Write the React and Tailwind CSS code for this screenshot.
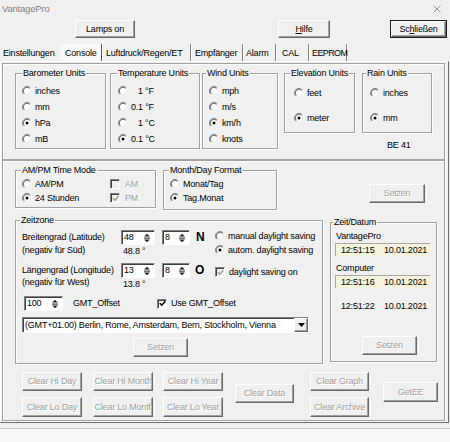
import React from 'react'

const raised = 'border border-t-white border-l-white border-r-[#696969] border-b-[#696969] shadow-[inset_-1px_-1px_0_#a0a0a0]'
const sunken = 'border border-t-[#808080] border-l-[#808080] border-r-white border-b-white shadow-[inset_1px_1px_0_#404040]'
const dis = 'text-[#a0a0a0] [text-shadow:1px_1px_0_#fff]'

function Btn({ children, className = '', disabled, def }) {
  const frame = def
    ? 'border border-t-white border-l-white border-r-[#696969] border-b-[#696969] shadow-[0_0_0_1px_#1a1a1a,inset_-1px_-1px_0_#a0a0a0]'
    : raised
  return (
    <div className={`flex items-center justify-center whitespace-nowrap overflow-hidden bg-[#f0f0f0] ${frame} ${disabled ? dis : ''} ${className}`}>
      {children}
    </div>
  )
}

function RadioDot({ checked }) {
  return (
    <svg width="10" height="10" viewBox="0 0 12 12" className="shrink-0">
      <circle cx="6" cy="6" r="5" fill="#fff" />
      <path d="M2.1 9.9A5.5 5.5 0 0 1 9.9 2.1" fill="none" stroke="#808080" />
      <path d="M9.9 2.1A5.5 5.5 0 0 1 2.1 9.9" fill="none" stroke="#fff" />
      <path d="M2.8 9.2A4.5 4.5 0 0 1 9.2 2.8" fill="none" stroke="#404040" />
      <path d="M9.2 2.8A4.5 4.5 0 0 1 2.8 9.2" fill="none" stroke="#dcdcdc" />
      {checked && <circle cx="6" cy="6" r="1.8" fill="#000" />}
    </svg>
  )
}

function Radio({ checked, children, className = '' }) {
  return (
    <div className={`flex items-center gap-[3px] ${className}`}>
      <RadioDot checked={checked} />
      <span className="whitespace-pre">{children}</span>
    </div>
  )
}

function CheckBox({ checked, disabled }) {
  return (
    <span className={`flex items-center justify-center w-[10px] h-[10px] shrink-0 ${sunken} ${disabled ? 'bg-[#f0f0f0]' : 'bg-white'}`}>
      {checked && (
        <svg width="7" height="7" viewBox="0 0 7 7">
          <path d="M0.8 3.2L2.8 5.2L6.3 1.3" fill="none" stroke={disabled ? '#a0a0a0' : '#000'} strokeWidth="1.6" />
        </svg>
      )}
    </span>
  )
}

function Check({ checked, disabled, children, className = '' }) {
  return (
    <div className={`flex items-center gap-[4px] ${className}`}>
      <CheckBox checked={checked} disabled={disabled} />
      <span className={disabled ? dis : ''}>{children}</span>
    </div>
  )
}

function Spin({ value, className = '' }) {
  return (
    <div className={`flex items-center h-[15px] bg-white ${sunken} ${className}`}>
      <span className="flex-1 pl-[2px]">{value}</span>
      <svg width="6" height="10" viewBox="0 0 7 11" className="mr-[4px]">
        <polygon points="3.5,0.5 6.8,3.8 0.2,3.8" fill="#222" />
        <rect x="0" y="5" width="7" height="1.2" fill="#222" />
        <polygon points="0.2,7.2 6.8,7.2 3.5,10.5" fill="#222" />
      </svg>
    </div>
  )
}

function Group({ title, className = '', legendClass = '', children }) {
  return (
    <fieldset className={`border border-[#a0a0a0] shadow-[inset_1px_1px_0_#fff,1px_1px_0_#fff] ${className}`}>
      <legend className={`px-[1px] leading-[11px] bg-[#f0f0f0] ${legendClass}`}>{title}</legend>
      {children}
    </fieldset>
  )
}

function Tab({ children, className = '', sep = true }) {
  return (
    <div className={`flex items-center pt-[1px] whitespace-nowrap ${sep ? 'border-r border-[#808080] shadow-[1px_0_0_#fff]' : ''} ${className}`}>
      {children}
    </div>
  )
}

function TimeBox({ time, date }) {
  return (
    <div className="flex items-center h-[13px] w-[95px] pl-[5px] bg-[#f6f3dc] border-t border-l border-[#a8a8a8]">
      <span className="w-[43px]">{time}</span>
      <span>{date}</span>
    </div>
  )
}

export default function App() {
  return (
    <div className="w-[450px] h-[442px] overflow-hidden flex flex-col bg-[#f0f0f0] text-black text-[9px] leading-[11px] tracking-[-0.2px] font-['Liberation_Sans',Arial,sans-serif]">
      {/* title bar */}
      <div className="h-[17px] flex items-center justify-between pl-[2px] pr-[9px] text-[#808080]">
        <span className="text-[9.5px]">VantagePro</span>
        <svg width="8" height="8" viewBox="0 0 8 8">
          <path d="M0.5 0.5L7.5 7.5M7.5 0.5L0.5 7.5" stroke="#8a8a8a" strokeWidth="0.9" />
        </svg>
      </div>

      {/* top buttons */}
      <div className="mt-[3px] h-[18px] flex items-start">
        <Btn className="ml-[75px] w-[60px] h-[18px]">Lamps on</Btn>
        <Btn className="ml-[143px] w-[52px] h-[18px]"><u>H</u>ilfe</Btn>
        <Btn def className="ml-[61px] mt-[1px] w-[55px] h-[16px]">Sc<u>h</u>ließen</Btn>
      </div>

      {/* tabs */}
      <div className="mt-[6px] h-[17px] flex">
        <Tab sep={false} className="w-[60px] pl-[3px]">Einstellungen</Tab>
        <Tab className="w-[42px] pl-[5px] bg-[#f8f8f8] border-r-[#5a5a5a]">Console</Tab>
        <Tab className="w-[89px] pl-[4px]">Luftdruck/Regen/ET</Tab>
        <Tab className="w-[52px] pl-[4px]">Empfänger</Tab>
        <Tab className="w-[33px] pl-[3px]">Alarm</Tab>
        <Tab className="w-[33px] pl-[6px]">CAL</Tab>
        <Tab className="w-[38px] pl-[3px] tracking-[-0.6px]">EEPROM</Tab>
      </div>

      {/* tab panel */}
      <div className="h-[362px] w-[449px] border border-t-white border-l-white border-r-[#696969] border-b-[#696969] flex flex-col">
        {/* units */}
        <div className="ml-[1px] mt-[1px] w-[443px] h-[97px] border border-[#a0a0a0] shadow-[1px_1px_0_#fff,inset_1px_1px_0_#fff] flex items-start pl-[12px] pt-[4px]">
          <Group title="Barometer Units" className="w-[91px]" legendClass="ml-[6px]">
            <div className="pl-[6px] pt-[4px] pb-[1px]">
              <Radio className="h-[16px]">inches</Radio>
              <Radio className="h-[16px]">mm</Radio>
              <Radio className="h-[16px]" checked>hPa</Radio>
              <Radio className="h-[16px]">mB</Radio>
            </div>
          </Group>
          <Group title="Temperature Units" className="ml-[4px] w-[90px]" legendClass="ml-[6px]">
            <div className="pl-[7px] pt-[4px] pb-[1px]">
              <Radio className="h-[16px]">{'   1 °F'}</Radio>
              <Radio className="h-[16px]">0.1 °F</Radio>
              <Radio className="h-[16px]">{'   1 °C'}</Radio>
              <Radio className="h-[16px]" checked>0.1 °C</Radio>
            </div>
          </Group>
          <Group title="Wind Units" className="ml-[2px] w-[76px]" legendClass="ml-[3px]">
            <div className="pl-[6px] pt-[4px] pb-[1px]">
              <Radio className="h-[16px]">mph</Radio>
              <Radio className="h-[16px]">m/s</Radio>
              <Radio className="h-[16px]" checked>km/h</Radio>
              <Radio className="h-[16px]">knots</Radio>
            </div>
          </Group>
          <Group title="Elevation Units" className="ml-[6px] w-[71px]" legendClass="ml-[5px]">
            <div className="pl-[9px] pt-[6px] pb-[6px] flex flex-col gap-[9px]">
              <Radio className="h-[16px]">feet</Radio>
              <Radio className="h-[16px]" checked>meter</Radio>
            </div>
          </Group>
          <div className="ml-[7px] flex flex-col">
            <Group title="Rain Units" className="w-[70px]" legendClass="ml-[3px]">
              <div className="pl-[7px] pt-[6px] pb-[6px] flex flex-col gap-[9px]">
                <Radio className="h-[16px]">inches</Radio>
                <Radio className="h-[16px]" checked>mm</Radio>
              </div>
            </Group>
            <div className="mt-[7px] pl-[25px]">BE 41</div>
          </div>
        </div>

        {/* rest */}
        <div className="ml-[1px] w-[443px] h-[261px] border border-[#a0a0a0] shadow-[1px_1px_0_#fff,inset_1px_1px_0_#fff] flex flex-col pl-[12px]">
          {/* row A */}
          <div className="pt-[4px] flex items-start">
            <Group title="AM/PM Time Mode" className="w-[141px]" legendClass="ml-[5px]">
              <div className="pl-[6px] pt-[1px] pb-[2px] flex">
                <div className="w-[88px]">
                  <Radio className="h-[14px]">AM/PM</Radio>
                  <Radio className="h-[14px]" checked>24 Stunden</Radio>
                </div>
                <div>
                  <Check disabled className="h-[14px] gap-[5px]">AM</Check>
                  <Check disabled checked className="h-[14px] gap-[5px]">PM</Check>
                </div>
              </div>
            </Group>
            <Group title="Month/Day Format" className="ml-[7px] w-[114px]" legendClass="ml-[5px]">
              <div className="pl-[6px] pt-[1px] pb-[4px]">
                <Radio className="h-[14px]">Monat/Tag</Radio>
                <Radio className="h-[14px]" checked>Tag.Monat</Radio>
              </div>
            </Group>
            <Btn disabled className="ml-[92px] mt-[19px] w-[56px] h-[19px]">Setzen</Btn>
          </div>

          {/* row B */}
          <div className="mt-[5px] flex items-start">
            <Group title="Zeitzone" className="w-[308px]" legendClass="ml-[4px]">
              <div className="pl-[6px] pt-[4px] pb-[6px] flex flex-col">
                <div className="flex items-start">
                  <div className="w-[99px] mt-[1px] leading-[13px]">
                    <div>Breitengrad (Latitude)</div>
                    <div>(negativ für Süd)</div>
                  </div>
                  <div className="flex flex-col">
                    <div className="flex items-center">
                      <Spin value="48" className="w-[34px]" />
                      <Spin value="8" className="ml-[7px] w-[28px]" />
                      <span className="w-[18px] pl-[6px] text-[12px] font-bold">N</span>
                    </div>
                    <div className="pl-[2px] leading-[13px]">48.8 °</div>
                  </div>
                  <div className="ml-[7px] -mt-[1px]">
                    <Radio className="h-[14px]">manual daylight saving</Radio>
                    <Radio className="h-[14px]" checked>autom. daylight saving</Radio>
                  </div>
                </div>
                <div className="mt-[5px] flex items-start">
                  <div className="w-[99px] mt-[1px] leading-[12px]">
                    <div>Längengrad (Longitude)</div>
                    <div>(negativ für West)</div>
                  </div>
                  <div className="flex flex-col">
                    <div className="flex items-center">
                      <Spin value="13" className="w-[34px]" />
                      <Spin value="8" className="ml-[7px] w-[28px]" />
                      <span className="w-[18px] pl-[5px] text-[12px] font-bold">O</span>
                    </div>
                    <div className="pl-[2px] leading-[13px]">13.8 °</div>
                  </div>
                  <Check disabled checked className="ml-[7px] mt-[2px] h-[14px]">
                    <span className="text-black [text-shadow:none]">daylight saving on</span>
                  </Check>
                </div>
                <div className="mt-[5px] flex items-center">
                  <Spin value="100" className="ml-[2px] w-[39px]" />
                  <span className="ml-[10px] w-[84px]">GMT_Offset</span>
                  <Check checked>Use GMT_Offset</Check>
                </div>
                <div className={`mt-[6px] flex items-center h-[16px] w-[287px] bg-white ${sunken}`}>
                  <span className="flex-1 pl-[2px] whitespace-nowrap overflow-hidden">(GMT+01.00) Berlin, Rome, Amsterdam, Bern, Stockholm, Vienna</span>
                  <div className={`w-[14px] h-[14px] flex items-center justify-center bg-[#f0f0f0] ${raised}`}>
                    <svg width="7" height="4" viewBox="0 0 7 4"><polygon points="0,0 7,0 3.5,4" fill="#000" /></svg>
                  </div>
                </div>
                <Btn disabled className="mt-[5px] ml-[111px] w-[55px] h-[19px]">Setzen</Btn>
              </div>
            </Group>
            <Group title="Zeit/Datum" className="ml-[7px] mt-[2px] w-[107px]" legendClass="ml-[2px]">
              <div className="pl-[4px] pt-[2px] pb-[6px] flex flex-col">
                <div className="pl-[1px] leading-[13px]">VantagePro</div>
                <TimeBox time="12:51:15" date="10.01.2021" />
                <div className="mt-[6px] pl-[1px] leading-[13px]">Computer</div>
                <TimeBox time="12:51:16" date="10.01.2021" />
                <div className="mt-[12px] pl-[6px] flex leading-[13px]">
                  <span className="w-[43px]">12:51:22</span>
                  <span>10.01.2021</span>
                </div>
                <Btn disabled className="mt-[23px] ml-[27px] w-[55px] h-[19px]">Setzen</Btn>
              </div>
            </Group>
          </div>

          {/* row C */}
          <div className="mt-[8px] flex items-start ml-[7px]">
            <div className="grid grid-cols-[60px_60px_60px] gap-x-[10.5px] gap-y-[6px]">
              <Btn disabled className="h-[19px]">Clear Hi Day</Btn>
              <Btn disabled className="h-[19px] justify-start pl-[1px]">Clear Hi Month</Btn>
              <Btn disabled className="h-[19px]">Clear Hi Year</Btn>
              <Btn disabled className="h-[20px]">Clear Lo Day</Btn>
              <Btn disabled className="h-[20px] justify-start pl-[1px]">Clear Lo Month</Btn>
              <Btn disabled className="h-[20px]">Clear Lo Year</Btn>
            </div>
            <Btn disabled className="ml-[12px] mt-[12px] w-[59px] h-[19px]">Clear Data</Btn>
            <div className="ml-[16px] flex flex-col gap-[6px]">
              <Btn disabled className="w-[59px] h-[19px]">Clear Graph</Btn>
              <Btn disabled className="w-[59px] h-[20px]">Clear Archive</Btn>
            </div>
            <Btn disabled className="ml-[14px] mt-[10px] w-[55px] h-[20px]">GetEE</Btn>
          </div>
        </div>
      </div>

      {/* bottom strip */}
      <div className="mt-[5px] flex-1 border-t border-[#c8c8c8] bg-[#f7f7f7]" />
    </div>
  )
}
